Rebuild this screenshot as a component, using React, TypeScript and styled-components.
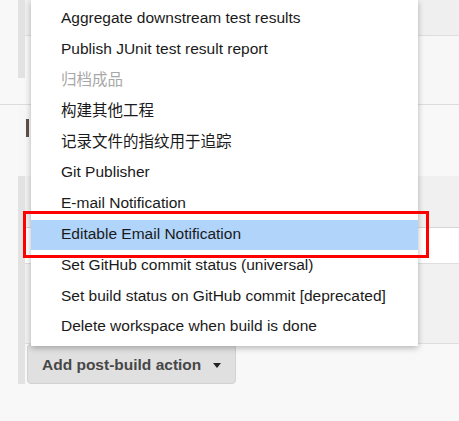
import React from "react";
import styled, { createGlobalStyle } from "styled-components";

const Global = createGlobalStyle`
  html, body { margin: 0; padding: 0; background: #f8f8f8; }
  body { font-family: "Liberation Sans", Arial, "Noto Sans CJK SC", sans-serif; overflow: hidden; }
`;

const Page = styled.div`
  position: relative;
  width: 459px;
  height: 421px;
  overflow: hidden;
  background: #f8f8f8;
`;

const Section = styled.div<{ $top?: boolean }>`
  display: flex;
  padding-left: 18px;
  border-top: ${(p) => (p.$top ? "1px solid #dcdcdc" : "none")};
`;

const Bar = styled.div<{ $h?: number }>`
  width: 7px;
  flex: none;
  background: #e2e2e2;
  height: ${(p) => (p.$h ? `${p.$h}px` : "auto")};
`;

const Body = styled.div`
  flex: 1;
  display: flex;
  flex-direction: column;
`;

const Row = styled.div<{ $h: number; $bg: string; $line?: string }>`
  height: ${(p) => p.$h}px;
  background: ${(p) => p.$bg};
  border-bottom: 1px solid ${(p) => p.$line ?? "#dedede"};
  box-sizing: border-box;
`;

const HeadingRow = styled.div`
  height: 71px;
  padding: 14px 0 0 8px;
  box-sizing: border-box;
  background: #f7f7f7;
`;

const Stub = styled.div`
  width: 3px;
  height: 18px;
  background: #5f5048;
`;

const ButtonRow = styled.div`
  height: 40px;
  padding: 0 0 0 2px;
  display: flex;
  align-items: flex-end;
`;

const AddButton = styled.button`
  display: flex;
  align-items: center;
  gap: 12px;
  height: 40px;
  padding: 2px 14px 0 14px;
  box-sizing: border-box;
  border: 1px solid #d2d2d2;
  border-radius: 4px;
  background: #e0e0e0;
  color: #474747;
  font-family: "Liberation Sans", Arial, sans-serif;
  font-weight: bold;
  font-size: 15.5px;
`;

const Caret = styled.span`
  width: 0;
  height: 0;
  border-left: 4.5px solid transparent;
  border-right: 4.5px solid transparent;
  border-top: 5px solid #222;
`;

const Menu = styled.ul`
  position: absolute;
  left: 31px;
  top: 0;
  width: 387px;
  margin: 0;
  padding: 4px 0 3px;
  list-style: none;
  background: #fff;
  box-shadow: 0 2px 6px rgba(0, 0, 0, 0.28);
`;

const Item = styled.li<{ $active?: boolean; $disabled?: boolean; $cjk?: boolean }>`
  height: 30.8px;
  display: flex;
  align-items: center;
  padding: 0 0 ${(p) => (p.$cjk ? 5 : 2)}px 30px;
  box-sizing: border-box;
  font-size: 15.5px;
  color: ${(p) => (p.$disabled ? "#a8a8a8" : "#1a1a1a")};
  background: ${(p) => (p.$active ? "#b0d4fa" : "transparent")};
  white-space: nowrap;
`;

const Mark = styled.div`
  position: absolute;
  left: 23px;
  top: 211px;
  width: 406px;
  height: 47px;
  box-sizing: border-box;
  border: 3px solid #ff0000;
`;

const items: { label: string; disabled?: boolean; active?: boolean; cjk?: boolean }[] = [
  { label: "Aggregate downstream test results" },
  { label: "Publish JUnit test result report" },
  { label: "归档成品", disabled: true, cjk: true },
  { label: "构建其他工程", cjk: true },
  { label: "记录文件的指纹用于追踪", cjk: true },
  { label: "Git Publisher" },
  { label: "E-mail Notification" },
  { label: "Editable Email Notification", active: true },
  { label: "Set GitHub commit status (universal)" },
  { label: "Set build status on GitHub commit [deprecated]" },
  { label: "Delete workspace when build is done" },
];

export default function App() {
  return (
    <Page>
      <Global />
      <Section>
        <Bar $h={78} />
        <Body>
          <Row $h={36} $bg="#efefef" />
          <Row $h={68} $bg="#f7f7f7" $line="#f7f7f7" />
        </Body>
      </Section>
      <Section $top>
        <HeadingRow>
          <Stub />
        </HeadingRow>
      </Section>
      <Section>
        <Bar />
        <Body>
          <Row $h={52} $bg="#f0f0f0" $line="#d6d6d6" />
          <Row $h={36} $bg="#ffffff" />
          <Row $h={80} $bg="#f1f1f1" />
          <ButtonRow>
            <AddButton>
              Add post-build action
              <Caret />
            </AddButton>
          </ButtonRow>
        </Body>
      </Section>
      <Menu>
        {items.map((it) => (
          <Item key={it.label} $active={it.active} $disabled={it.disabled} $cjk={it.cjk}>
            {it.label}
          </Item>
        ))}
      </Menu>
      <Mark />
    </Page>
  );
}
